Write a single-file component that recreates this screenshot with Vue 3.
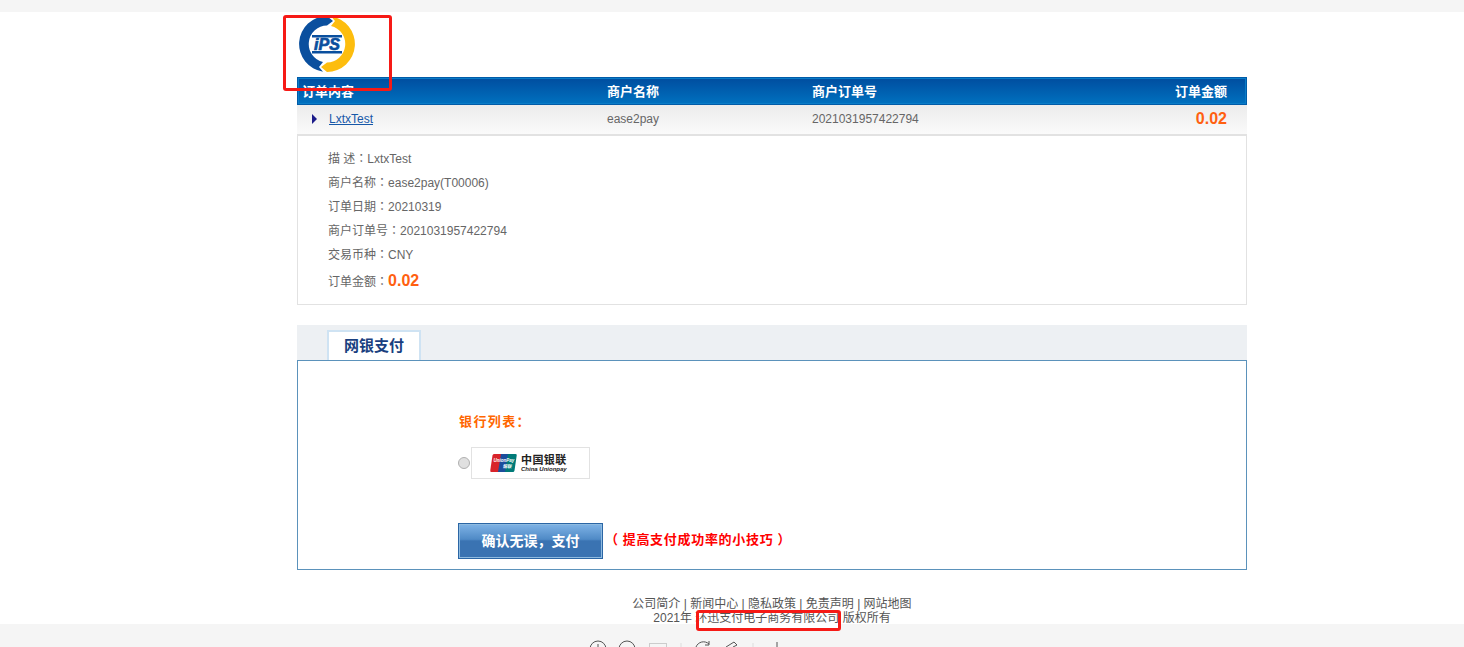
<script setup>
const details = [
  { label: '描 述', value: 'LxtxTest' },
  { label: '商户名称', value: 'ease2pay(T00006)' },
  { label: '订单日期', value: '20210319' },
  { label: '商户订单号', value: '2021031957422794' },
  { label: '交易币种', value: 'CNY' },
]
const links = ['公司简介', '新闻中心', '隐私政策', '免责声明', '网站地图']
</script>

<template>
  <div class="page">
    <div class="top-strip"></div>
    <main class="wrap">
      <div class="logo-row">
        <svg class="logo" width="58" height="58" viewBox="-29 -29 58 58">
          <path d="M0 -28 A28 28 0 0 0 -4 27.7 L-8 23 L-4 18 A18.5 18.5 0 0 1 0 -18.5 L6 -23 Z" fill="#0a4f9e" />
          <path d="M0 28 A28 28 0 0 0 4 -27.7 L8 -23 L4 -18 A18.5 18.5 0 0 1 0 18.5 L-6 23 Z" fill="#fdbd0e" />
          <rect x="-15" y="-9" width="30" height="2.5" fill="#0a4f9e" />
          <rect x="-15" y="7" width="30" height="2.5" fill="#0a4f9e" />
          <text x="0" y="6" text-anchor="middle" class="logo-text">iPS</text>
        </svg>
      </div>
      <div class="order-head">
        <span class="c1">订单内容</span>
        <span class="c2">商户名称</span>
        <span class="c3">商户订单号</span>
        <span class="c4">订单金额</span>
      </div>
      <div class="order-row">
        <span class="c1 row-first"><i class="arrow"></i><a class="link">LxtxTest</a></span>
        <span class="c2">ease2pay</span>
        <span class="c3">2021031957422794</span>
        <span class="c4 amount">0.02</span>
      </div>
      <section class="details">
        <div v-for="d in details" :key="d.label" class="line">{{ d.label }}<span class="colon">：</span>{{ d.value }}</div>
        <div class="line total">订单金额<span class="colon">：</span><b class="total-num">0.02</b></div>
      </section>

      <div class="tabs"><div class="tab">网银支付</div></div>
      <section class="pay">
        <div class="bank-title">银行列表：</div>
        <div class="bank-row">
          <span class="radio"></span>
          <div class="bank-card">
            <svg width="27" height="18" viewBox="0 0 27 18">
              <path d="M4 0 H12 L9 18 H1 Q0 18 0.3 16 L2.5 1.5 Q2.8 0 4 0 Z" fill="#d8232a" />
              <path d="M11 0 H19 L16 18 H8 Z" fill="#1c4d9c" />
              <path d="M18 0 H25.5 Q27 0 26.7 1.5 L24.5 16.5 Q24.2 18 23 18 H15 Z" fill="#007a78" />
              <text x="14" y="8" text-anchor="middle" class="up-text">UnionPay</text>
              <text x="17" y="14" text-anchor="middle" class="up-text">银联</text>
            </svg>
            <div class="bank-text">
              <span class="bank-cn">中国银联</span>
              <span class="bank-en">China Unionpay</span>
            </div>
          </div>
        </div>
        <div class="actions">
          <button class="confirm">确认无误，支付</button>
          <span class="tips"><span class="paren-l">（</span>提高支付成功率的小技巧<span class="paren-r">）</span></span>
        </div>
      </section>

      <footer class="foot">
        <div class="foot-line">
          <template v-for="(l, i) in links" :key="l">{{ l }}<span v-if="i < links.length - 1"> | </span></template>
        </div>
        <div class="foot-line">2021年 环迅支付电子商务有限公司 版权所有</div>
      </footer>
    </main>

    <div class="toolbar">
      <svg width="200" height="23" viewBox="0 0 200 23" fill="none" stroke="#555" stroke-width="1">
        <circle cx="18" cy="25" r="8" />
        <path d="M18 20 V23" />
        <circle cx="47" cy="25" r="8" />
        <rect x="69.5" y="19.5" width="17" height="14" stroke="#ccc" />
        <path d="M101 19 V23" stroke="#ddd" />
        <path d="M116 23 A8 8 0 0 1 129 20" />
        <path d="M129 17 V21 H125" />
        <path d="M146 23 L154 18 L157 21 L153 23" />
        <path d="M173 19 V23" stroke="#ddd" />
        <path d="M197 18 V23" />
      </svg>
    </div>

    <i class="mark mark-logo"></i>
    <i class="mark mark-company"></i>
  </div>
</template>

<style>
html, body { margin: 0; padding: 0; background: #fff; overflow: hidden; }
</style>

<style scoped>
.page {
  position: relative;
  height: 647px;
  overflow: hidden;
  font-family: "Liberation Sans", Arial, "Noto Sans CJK SC", sans-serif;
  font-size: 12px;
  color: #666;
}
.top-strip { height: 12px; background: #f5f5f5; }
.wrap { width: 950px; margin: 0 auto 0 297px; }
.logo-row { height: 65px; box-sizing: border-box; padding-top: 3px; }
.logo { display: block; margin-left: 1px; }
.logo-text { font: italic 900 16px "Liberation Sans", sans-serif; fill: #0a4f9e; stroke: #0a4f9e; stroke-width: 0.7; }

.order-head, .order-row { display: flex; align-items: center; box-sizing: border-box; }
.order-head {
  height: 28px;
  border: 1px solid #005ba8;
  box-shadow: inset 0 0 0 1px #0a7cc7;
  background: linear-gradient(#004d9f, #0071bf);
  color: #fff;
  font-weight: 700;
  font-size: 13px;
  padding-bottom: 1px;
}
.order-row {
  height: 31px;
  padding-bottom: 1px;
  background: linear-gradient(#ececec, #fafafa);
  border-bottom: 2px solid #e2e2e2;
}
.c1 { width: 309px; padding-left: 4px; box-sizing: border-box; }
.c2 { width: 205px; }
.c3 { width: 345px; }
.c4 { width: 70px; text-align: right; }
.order-row .c1 { width: 310px; padding-left: 15px; }
.order-row .c4 { width: 70px; }
.row-first { display: flex; align-items: center; }
.arrow {
  width: 0; height: 0;
  border-left: 5px solid #1c1c8a;
  border-top: 5px solid transparent;
  border-bottom: 5px solid transparent;
  margin-right: 12px;
}
.link { color: #1658a8; text-decoration: underline; }
.amount { color: #ff6010; font-size: 16px; font-weight: 700; }

.details {
  height: 169px;
  box-sizing: border-box;
  border: 1px solid #e2e2e2;
  border-top: 0;
  padding: 10px 0 0 30px;
}
.line { height: 24px; line-height: 24px; }
.colon { font-family: "Noto Sans CJK TC", sans-serif; }
.total { height: 30px; line-height: 30px; }
.total-num { color: #ff6010; font-size: 16px; }

.tabs {
  margin-top: 20px;
  height: 35px;
  box-sizing: border-box;
  background: #edf0f3;
  padding: 5px 0 0 30px;
}
.tab {
  width: 94px;
  height: 30px;
  box-sizing: border-box;
  border: 2px solid #cfe3f3;
  border-bottom: 0;
  background: #fff;
  color: #1a3f7f;
  font-size: 15px;
  font-weight: 700;
  text-align: center;
  line-height: 28px;
}
.pay {
  height: 210px;
  box-sizing: border-box;
  border: 1px solid #5b92bb;
  padding: 53px 0 0 160px;
}
.bank-title { color: #ff6600; font-weight: 700; font-size: 13px; letter-spacing: 1.4px; line-height: 16px; margin-left: 1px; }
.bank-row { display: flex; align-items: center; margin-top: 17px; }
.radio {
  width: 10px;
  height: 10px;
  border-radius: 50%;
  border: 1px solid #b0b0b0;
  background: #e0e0e0;
  margin-right: 1px;
}
.bank-card {
  width: 119px;
  height: 32px;
  box-sizing: border-box;
  border: 1px solid #e2e2e2;
  padding-left: 18px;
  display: flex;
  align-items: center;
  gap: 4px;
}
.up-text { font: italic 700 4.5px "Liberation Sans", "Noto Sans CJK SC", sans-serif; fill: #fff; }
.bank-text { display: flex; flex-direction: column; color: #222; }
.bank-cn { font-size: 11px; font-weight: 700; line-height: 12px; letter-spacing: 0.4px; }
.bank-en { font-size: 6px; font-style: italic; font-weight: 700; line-height: 7px; }
.actions { display: flex; align-items: center; margin-top: 44px; }
.confirm {
  width: 145px;
  height: 36px;
  box-sizing: border-box;
  padding: 0 0 2px;
  border: 1px solid #2b66a5;
  box-shadow: inset 0 0 0 1px #8fbbe0;
  background: linear-gradient(#7fb3e6 0, #4f8ac6 45%, #3a73b2 50%, #3a73b2 100%);
  color: #fff;
  font: 700 14px "Liberation Sans", "Noto Sans CJK SC", sans-serif;
}
.tips { color: #f00; font-weight: 700; font-size: 13px; letter-spacing: 0.7px; margin: 0 0 6px 2px; }
.paren-l { margin-right: 4px; }
.paren-r { margin-left: 4px; }

.foot { margin-top: 27px; text-align: center; color: #555; line-height: 14px; font-size: 12px; }
.foot-line { white-space: nowrap; height: 14px; }
.toolbar { position: absolute; left: 0; right: 0; top: 624px; height: 23px; background: #f5f5f5; padding-left: 580px; box-sizing: border-box; }
.toolbar svg { display: block; }

.mark { position: absolute; display: block; box-sizing: border-box; border: 3px solid #f61a16; border-radius: 3px; }
.mark-logo { left: 283px; top: 15px; width: 109px; height: 76px; }
.mark-company {
  left: 696px;
  top: 610px;
  width: 145px;
  height: 21px;
  background: linear-gradient(transparent 11px, #fff 11px);
}
</style>
